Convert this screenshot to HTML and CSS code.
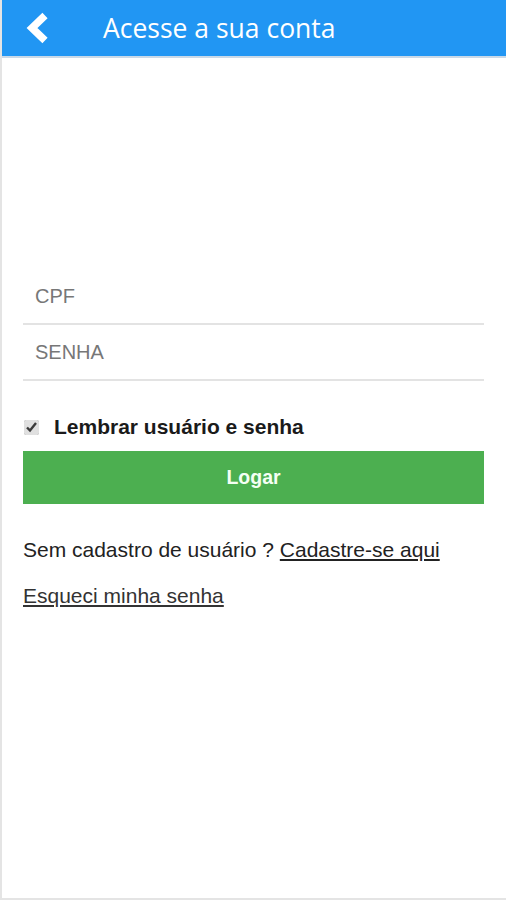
FILE: index.html
```html
<!DOCTYPE html>
<html lang="pt">
<head>
<meta charset="utf-8">
<title>Acesse a sua conta</title>
<link rel="stylesheet" href="styles.css">
</head>
<body>
<div class="app">
  <header class="topbar">
    <a class="back" href="#" aria-label="Voltar">
      <svg width="26" height="32" viewBox="0 0 26 32"><polyline points="20,3.5 7,16 20,28.5" fill="none" stroke="#fff" stroke-width="7.5" stroke-linejoin="miter" stroke-linecap="butt"/></svg>
    </a>
    <h1 class="title">Acesse a sua conta</h1>
  </header>
  <main class="content">
    <form class="login">
      <input class="field" type="text" placeholder="CPF">
      <input class="field" type="password" placeholder="SENHA">
      <label class="remember"><input type="checkbox" checked class="check"> <span>Lembrar usuário e senha</span></label>
      <button class="btn" type="button">Logar</button>
    </form>
    <p class="line">Sem cadastro de usuário ? <a href="#" class="link">Cadastre-se aqui</a></p>
    <p class="line"><a href="#" class="link muted">Esqueci minha senha</a></p>
  </main>
</div>
</body>
</html>
```
FILE: styles.css
```css
* { box-sizing: border-box; }
html, body { margin: 0; padding: 0; background: #fff; }
body { font-family: "Liberation Sans", Arial, sans-serif; color: #222; }
.app {
  height: 900px;
  border-bottom: 2px solid #e4e4e4;
  border-left: 2px solid #e4e4e4;
  display: flex;
  flex-direction: column;
}
.topbar {
  height: 58px;
  background: #2196f3;
  border-bottom: 2px solid #c9d9e8;
  display: flex;
  align-items: center;
  flex-shrink: 0;
}
.back {
  display: flex;
  margin-left: 23px;
  width: 26px;
  height: 32px;
}
.title {
  margin: 0 0 0 52px;
  font-family: "Open Sans", "Noto Sans", sans-serif;
  font-weight: 400;
  font-size: 26.5px;
  color: #fff;
  letter-spacing: 0;
}
.content { padding: 211px 22px 0 21px; }
.login { display: flex; flex-direction: column; }
.field {
  height: 56px;
  border: 0;
  border-bottom: 2px solid #e3e3e3;
  padding: 0 12px;
  font-family: "Liberation Sans", Arial, sans-serif;
  font-size: 20px;
  color: #333;
  outline: none;
  background: transparent;
}
.field::placeholder { color: #777; }
.remember {
  display: flex;
  align-items: center;
  margin-top: 36px;
  font-weight: bold;
  font-size: 21px;
  color: #1a1a1a;
  height: 20px;
}
.check {
  margin: 0 15px 0 1px;
  width: 15px;
  height: 15px;
  accent-color: #e0e0e0;
}
.btn {
  margin-top: 14px;
  height: 53px;
  border: 0;
  background: #4caf50;
  color: #f4fff4;
  font-family: "Liberation Sans", Arial, sans-serif;
  font-weight: bold;
  font-size: 19.5px;
}
.line {
  margin: 35px 0 0 0;
  font-size: 21px;
  line-height: 22px;
  color: #222;
}
.line + .line { margin-top: 24px; }
.link { color: #222; text-decoration: underline; }
.muted { color: #333; }
```
